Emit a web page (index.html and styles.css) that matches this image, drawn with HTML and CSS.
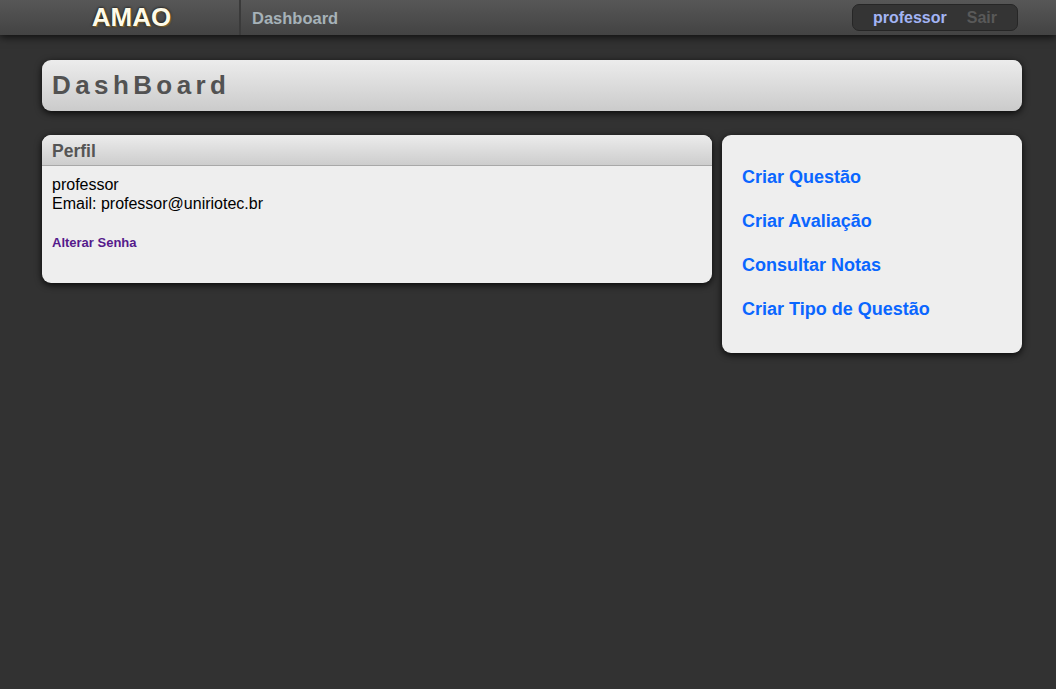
FILE: index.html
```html
<!DOCTYPE html>
<html lang="pt">
<head>
<meta charset="utf-8">
<title>AMAO - Dashboard</title>
<link rel="stylesheet" href="styles.css">
</head>
<body>
<header class="topbar">
  <div class="brand">AMAO</div>
  <nav class="mainnav"><a class="navlink" href="#">Dashboard</a></nav>
  <div class="userbox">
    <a class="user" href="#">professor</a>
    <a class="logout" href="#">Sair</a>
  </div>
</header>
<main class="content">
  <div class="titlebar"><h1>DashBoard</h1></div>
  <div class="columns">
    <section class="card profile">
      <div class="card-head">Perfil</div>
      <div class="card-body">
        <div>professor</div>
        <div>Email: professor@uniriotec.br</div>
        <a class="pwd" href="#">Alterar Senha</a>
      </div>
    </section>
    <section class="card actions">
      <a href="#">Criar Questão</a>
      <a href="#">Criar Avaliação</a>
      <a href="#">Consultar Notas</a>
      <a href="#">Criar Tipo de Questão</a>
    </section>
  </div>
</main>
</body>
</html>
```
FILE: styles.css
```css
* { box-sizing: border-box; }
html, body { margin: 0; padding: 0; }
body {
  background: #323232;
  font-family: "Liberation Sans", Arial, sans-serif;
  min-height: 689px;
}
a { text-decoration: none; }

.topbar {
  height: 35px;
  display: flex;
  align-items: stretch;
  background: linear-gradient(#575757, #434343);
  box-shadow: 0 2px 8px rgba(0,0,0,0.75);
  position: relative;
  z-index: 2;
}
.brand {
  width: 241px;
  border-right: 2px solid #3a3a3a;
  display: flex;
  align-items: center;
  justify-content: center;
  padding-left: 24px;
  font-size: 26px;
  font-weight: bold;
  color: #fffbe8;
  text-shadow: 0 0 3px #000, 1px 1px 1px #b08a3a;
}
.mainnav {
  flex: 1;
  display: flex;
  align-items: center;
  padding-left: 11px;
}
.navlink {
  color: #a6b2b8;
  font-weight: bold;
  font-size: 16.5px;
  padding-top: 1px;
}
.userbox {
  margin: 4px 38px 4px 0;
  width: 166px;
  display: flex;
  align-items: center;
  justify-content: center;
  gap: 20px;
  background: #343434;
  border: 1px solid #262626;
  border-radius: 7px;
  font-weight: bold;
  font-size: 16px;
}
.user { color: #a3b4f5; }
.logout { color: #595959; }

.content {
  padding: 25px 34px 0 42px;
}
.titlebar {
  height: 51px;
  border-radius: 9px;
  background: linear-gradient(#ececec, #cbcbcb);
  box-shadow: 0 2px 7px rgba(0,0,0,0.85);
  display: flex;
  align-items: center;
  padding-left: 10px;
}
.titlebar h1 {
  margin: 0;
  font-size: 26px;
  font-weight: bold;
  color: #525252;
  letter-spacing: 4.4px;
}
.columns {
  display: flex;
  gap: 10px;
  margin-top: 24px;
  align-items: flex-start;
}
.card {
  background: #eeeeee;
  border-radius: 9px;
  box-shadow: 0 2px 7px rgba(0,0,0,0.85);
  overflow: hidden;
}
.profile { width: 670px; height: 148px; }
.card-head {
  height: 31px;
  background: linear-gradient(#ececec, #cdcdcd);
  border-bottom: 1px solid #a8a8a8;
  padding: 6px 10px 0;
  font-size: 17.5px;
  font-weight: bold;
  color: #555;
  line-height: 21px;
}
.card-body {
  padding: 9px 10px 0;
  font-size: 16px;
  color: #000;
  line-height: 19px;
}
.pwd {
  display: block;
  margin-top: 20px;
  font-size: 13px;
  font-weight: bold;
  color: #551a8b;
}
.actions {
  width: 300px;
  height: 218px;
  display: flex;
  flex-direction: column;
  padding: 32px 20px 0;
  gap: 23px;
}
.actions a {
  color: #0a66ff;
  font-size: 18px;
  font-weight: bold;
  line-height: 21px;
}
```
